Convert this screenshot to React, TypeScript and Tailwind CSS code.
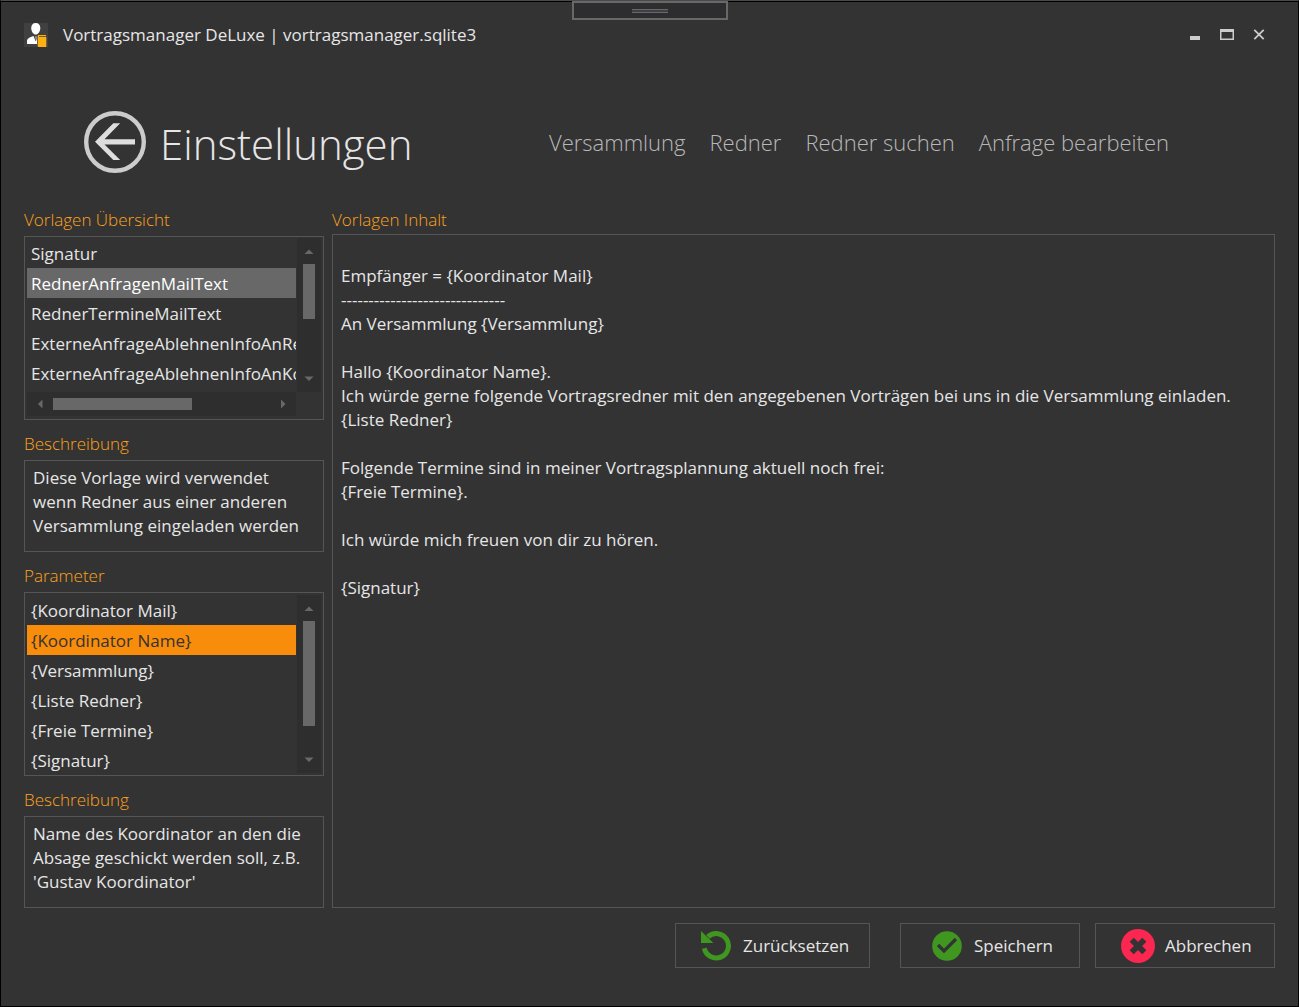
import React, { useState } from 'react';

const templates = [
  'Signatur',
  'RednerAnfragenMailText',
  'RednerTermineMailText',
  'ExterneAnfrageAblehnenInfoAnRedner',
  'ExterneAnfrageAblehnenInfoAnKoordinator',
];

const parameters = [
  '{Koordinator Mail}',
  '{Koordinator Name}',
  '{Versammlung}',
  '{Liste Redner}',
  '{Freie Termine}',
  '{Signatur}',
];

const sections = ['Versammlung', 'Redner', 'Redner suchen', 'Anfrage bearbeiten'];

const templateText = `
Empfänger = {Koordinator Mail}
------------------------------
An Versammlung {Versammlung}

Hallo {Koordinator Name}.
Ich würde gerne folgende Vortragsredner mit den angegebenen Vorträgen bei uns in die Versammlung einladen.
{Liste Redner}

Folgende Termine sind in meiner Vortragsplannung aktuell noch frei:
{Freie Termine}.

Ich würde mich freuen von dir zu hören.

{Signatur}`;

function AppIcon() {
  return (
    <svg width="24" height="24" viewBox="0 0 24 24" aria-hidden="true">
      <rect width="24" height="24" fill="#404040" />
      <path d="M11.7 0C14.7 0 16.3 2 16.3 5C16.3 8 14.3 11.6 11.7 11.6C9.1 11.6 7.2 8 7.2 5C7.2 2 8.8 0 11.7 0Z" fill="#fff" />
      <path d="M3 21V18C3 15.5 5.5 14.6 9.5 13L11.7 18.5L13 14V21Z" fill="#fff" />
      <path d="M10.6 13.2H13V15L12 18Z" fill="#8a8f94" />
      <path d="M14.5 12H22V13.2H15V14H22.3V24H15C14.2 24 13.7 23.5 13.7 22.7V13C13.7 12.4 14 12 14.5 12Z" fill="#fdb012" />
    </svg>
  );
}

function BackIcon() {
  return (
    <svg width="62" height="62" viewBox="0 0 62 62" aria-hidden="true">
      <circle cx="31" cy="31" r="28.8" fill="none" stroke="#cccccc" strokeWidth="4.4" />
      <path d="M11 30.8L29.3 12.3H36.2L20.5 28.2H51V33.4H20.5L36.2 49H29.3Z" fill="#dedede" />
    </svg>
  );
}

function ResetIcon() {
  return (
    <svg width="30" height="30" viewBox="0 0 30 30" aria-hidden="true">
      <path d="M3.3 17.3A12.2 12.2 0 1 0 6.9 5.9" fill="none" stroke="#3f9720" strokeWidth="5" />
      <path d="M0 0L12.4 12H0Z" fill="#3f9720" />
    </svg>
  );
}

function SaveIcon() {
  return (
    <svg width="30" height="30" viewBox="0 0 30 30" aria-hidden="true">
      <circle cx="15" cy="15" r="14.8" fill="#3f9720" />
      <path d="M6 14L12 20L24 8" fill="none" stroke="#333" strokeWidth="3.2" />
    </svg>
  );
}

function CancelIcon() {
  return (
    <svg width="34" height="34" viewBox="0 0 34 34" aria-hidden="true">
      <circle cx="17" cy="17" r="17" fill="#fb2750" />
      <path d="M10.7 10.7L23.3 23.3M23.3 10.7L10.7 23.3" stroke="#333" strokeWidth="5.8" />
    </svg>
  );
}

function Arrow({ d }: { d: string }) {
  return (
    <svg width="10" height="10" viewBox="0 0 10 10" aria-hidden="true" className="shrink-0">
      <path d={d} fill="#686868" />
    </svg>
  );
}

function VerticalBar({ thumb }: { thumb: string }) {
  return (
    <div className="flex w-6 flex-col items-center bg-[#2e2e2e] py-2">
      <Arrow d="M0.5 8L5 3.5L9.5 8Z" />
      <div className={`mt-2 mb-auto w-3 bg-[#686868] ${thumb}`} />
      <Arrow d="M0.5 2.5L5 7L9.5 2.5Z" />
    </div>
  );
}

function HorizontalBar() {
  return (
    <div className="flex h-6 items-center bg-[#2e2e2e] px-2">
      <Arrow d="M7.5 0.5L3 5L7.5 9.5Z" />
      <div className="mr-auto ml-2 h-3 w-[139px] bg-[#686868]" />
      <Arrow d="M3 0.5L7.5 5L3 9.5Z" />
    </div>
  );
}

function List({
  labelId,
  items,
  selected,
  onSelect,
  selectedClass,
}: {
  labelId: string;
  items: string[];
  selected: string;
  onSelect: (item: string) => void;
  selectedClass: string;
}) {
  return (
    <ul aria-labelledby={labelId} className="min-w-0 flex-1 overflow-hidden">
      {items.map((item) => (
        <li key={item}>
          <button
            type="button"
            aria-pressed={item === selected}
            onClick={() => onSelect(item)}
            className={`block h-[30px] w-full overflow-hidden pt-0.5 pl-1 text-left whitespace-nowrap ${item === selected ? selectedClass : ''}`}
          >
            {item}
          </button>
        </li>
      ))}
    </ul>
  );
}

function Label({ id, children }: { id: string; children: React.ReactNode }) {
  return (
    <h2 id={id} className="mb-1 leading-6 font-light text-[#ffa21a]">
      {children}
    </h2>
  );
}

const frame = 'border border-[#555]';

export default function App() {
  const [template, setTemplate] = useState('RednerAnfragenMailText');
  const [parameter, setParameter] = useState('{Koordinator Name}');
  const [text, setText] = useState(templateText);

  return (
    <div className="relative flex min-h-screen flex-col border border-black border-t-[#4a4a4a] bg-[#333] px-[23px] pb-[38px] font-['Open_Sans',sans-serif] text-[17px] text-[#e6e6e6]">
      <div className="absolute inset-x-0 top-0 h-px bg-black" />
      <div className="absolute inset-x-0 top-0 mx-auto flex h-[19px] w-[156px] items-start justify-center border-2 border-[#686868] bg-[#2d2d30] pt-1.5">
        <div className="h-1 w-9 border-y border-[#686868] bg-[#3f3f46]" />
      </div>

      <header className="flex h-[67px] items-center">
        <AppIcon />
        <span className="ml-[15px]">Vortragsmanager DeLuxe | vortragsmanager.sqlite3</span>
        <div className="mr-1 ml-auto flex gap-2">
          <button type="button" aria-label="Minimieren" className="flex size-6 items-center justify-center">
            <svg width="16" height="16" viewBox="0 0 16 16"><rect x="3" y="9" width="10" height="4" fill="#ccc" /></svg>
          </button>
          <button type="button" aria-label="Maximieren" className="flex size-6 items-center justify-center">
            <svg width="16" height="16" viewBox="0 0 16 16"><path fillRule="evenodd" d="M1 2H15V13H1ZM2.5 5V11.5H13.5V5Z" fill="#ccc" /></svg>
          </button>
          <button type="button" aria-label="Schließen" className="flex size-6 items-center justify-center">
            <svg width="16" height="16" viewBox="0 0 16 16"><path d="M3.3 2.8L12.7 12.2M12.7 2.8L3.3 12.2" stroke="#ccc" strokeWidth="1.8" /></svg>
          </button>
        </div>
      </header>

      <div className="flex h-[140px] items-center pt-2 pl-[60px]">
        <div className="flex w-[465px] shrink-0 items-center">
          <button type="button" aria-label="Zurück" className="shrink-0">
            <BackIcon />
          </button>
          <h1 className="ml-3.5 pt-1 text-[42px] leading-none font-light">Einstellungen</h1>
        </div>
        <nav className="flex gap-6 text-[22px] font-light whitespace-nowrap text-[#b8b8b8]">
          {sections.map((s) => (
            <a key={s} href="#">{s}</a>
          ))}
        </nav>
      </div>

      <main className="flex flex-1 gap-2">
        <div className="flex w-[300px] shrink-0 flex-col gap-3">
          <section>
            <Label id="l-templates">Vorlagen Übersicht</Label>
            <div className={`h-[184px] px-0.5 py-px ${frame}`}>
              <div className="flex h-[154px] gap-px">
                <List labelId="l-templates" items={templates} selected={template} onSelect={setTemplate} selectedClass="bg-[#686868] text-white" />
                <VerticalBar thumb="h-[55px]" />
              </div>
              <div className="mr-[25px]">
                <HorizontalBar />
              </div>
            </div>
          </section>
          <section>
            <Label id="l-description">Beschreibung</Label>
            <p className={`h-[92px] px-2 py-[5px] leading-6 ${frame}`}>
              Diese Vorlage wird verwendet wenn Redner aus einer anderen Versammlung eingeladen werden
            </p>
          </section>
          <section>
            <Label id="l-parameters">Parameter</Label>
            <div className={`flex h-[184px] gap-px p-0.5 ${frame}`}>
              <List labelId="l-parameters" items={parameters} selected={parameter} onSelect={setParameter} selectedClass="bg-[#f88c0b] text-[#333]" />
              <VerticalBar thumb="h-[105px]" />
            </div>
          </section>
          <section>
            <Label id="l-parameter-description">Beschreibung</Label>
            <p className={`h-[92px] px-2 py-[5px] leading-6 ${frame}`}>
              Name des Koordinator an den die Absage geschickt werden soll, z.B. 'Gustav Koordinator'
            </p>
          </section>
        </div>
        <section className="flex min-w-0 flex-1 flex-col">
          <label htmlFor="content" className="mb-0.5 leading-6 font-light text-[#ffa21a]">Vorlagen Inhalt</label>
          <textarea
            id="content"
            value={text}
            onChange={(e) => setText(e.target.value)}
            spellCheck={false}
            className={`w-full flex-1 resize-none bg-transparent px-2 py-[5px] leading-6 outline-none ${frame}`}
          />
        </section>
      </main>

      <footer className="mt-[15px] flex h-[45px] justify-end">
        <button type="button" className={`mr-[30px] flex w-[195px] items-center gap-3 pl-[25px] ${frame}`}>
          <ResetIcon />
          Zurücksetzen
        </button>
        <button type="button" className={`mr-[15px] flex w-[180px] items-center gap-3 pl-[31px] ${frame}`}>
          <SaveIcon />
          Speichern
        </button>
        <button type="button" className={`flex w-[180px] items-center gap-2.5 pl-[25px] ${frame}`}>
          <CancelIcon />
          Abbrechen
        </button>
      </footer>
    </div>
  );
}
